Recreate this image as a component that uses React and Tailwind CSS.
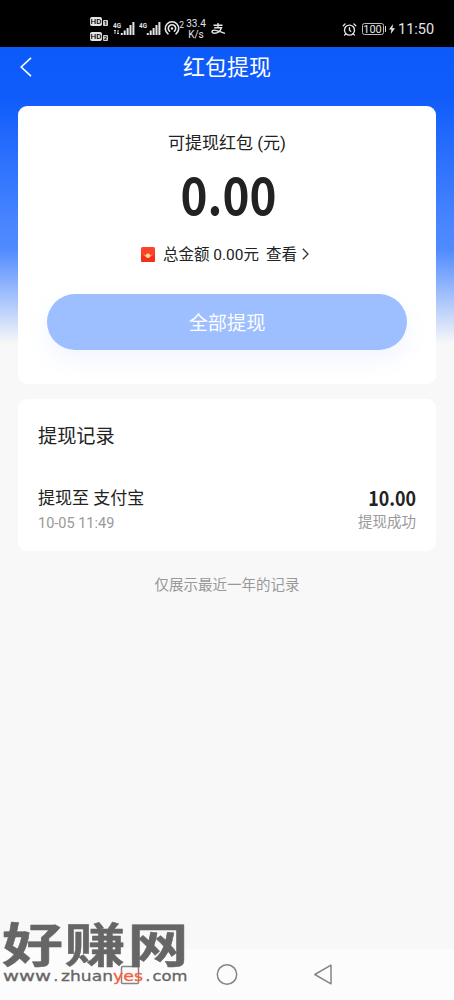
import { AlarmClock } from 'lucide-react';

const records = [
  { title: '提现至 支付宝', time: '10-05 11:49', amount: '10.00', status: '提现成功' },
];

const SignalIcon = ({ roaming }) => (
  <svg className="w-[22px] h-[16px]" viewBox="0 0 22 16" fill="#e5e5e5">
    <text x="0" y="6.5" fontSize="8" fontWeight="700" textLength="8" lengthAdjust="spacingAndGlyphs" fontFamily="Roboto">4G</text>
    {roaming && <path d="M2 9v4M1 10l1-1 1 1M5 9v4M4 12l1 1 1-1" stroke="#e5e5e5" strokeWidth="0.9" fill="none" />}
    <rect x="7.8" y="12" width="2" height="2" />
    <rect x="10.7" y="9.5" width="2" height="4.5" />
    <rect x="13.6" y="7" width="2" height="7" />
    <rect x="16.5" y="4" width="2" height="10" />
    <rect x="19.4" y="1" width="2" height="13" />
  </svg>
);

const StatusBar = () => (
  <div className="h-[47px] shrink-0 bg-black text-[#e5e5e5] flex justify-between pl-[90px] pr-5">
    <div className="flex">
      {/* HD badges */}
      <div className="flex flex-col gap-[6px] pt-[17px] w-[23px]">
        {['1', '2'].map((n) => (
          <div key={n} className="flex items-end gap-[1px] h-[9px]">
            <span className="w-[12px] h-[9px] rounded-[2px] bg-[#e5e5e5] text-black text-[8px] leading-[9px] font-medium text-center">HD</span>
            <span className="w-[5px] h-[6px] rounded-[1px] bg-[#d4d4d4] text-black text-[6px] leading-[6px] font-bold text-center">{n}</span>
          </div>
        ))}
      </div>
      <div className="flex pt-[21px] gap-[4px]">
        <SignalIcon roaming />
        <SignalIcon />
      </div>
      {/* Hotspot */}
      <svg className="w-[21px] h-[17px] mt-[20px] ml-[3px]" viewBox="0 0 21 17" fill="none" stroke="#e5e5e5" strokeWidth="1.6" strokeLinecap="round">
        <path d="M4 13.8a6.7 6.7 0 1 1 8 0" />
        <path d="M5.6 11.2a3.7 3.7 0 1 1 4.8 0" />
        <circle cx="8" cy="8.5" r="1.2" fill="#e5e5e5" stroke="none" />
        <text x="15.2" y="7.8" fontSize="8.5" fontFamily="Roboto" fill="#e5e5e5" stroke="none">2</text>
      </svg>
      <div className="w-[22px] pt-[18px] text-[10px] leading-[11px] text-center whitespace-nowrap">
        <div>33.4</div>
        <div>K/s</div>
      </div>
      {/* Alipay */}
      <svg className="w-[15px] h-[12px] mt-[23px] ml-[4px]" viewBox="0 0 15 12" fill="none" stroke="#e5e5e5" strokeWidth="1.4">
        <path d="M2.5 2.3h9M7 0v4.7M3.2 4.8h7.3C9.5 7.5 7 10.3 3.4 10.3c-3.2 0-2.9-3.2-.2-3.2 3 0 6.2 2 10.8 3.3" />
      </svg>
    </div>
    <div className="flex items-center pt-[11px]">
      <AlarmClock className="w-[15px] h-[15px]" strokeWidth={2.2} />
      <div className="ml-[5px] w-[22px] h-[12px] border border-[#bdbdbd] rounded-[2.5px] text-[11px] leading-[11px] text-center">100</div>
      <div className="w-[1.5px] h-[6px] ml-[1px] bg-[#d4d4d4]" />
      <svg className="w-[6px] h-[10px] ml-[3px]" viewBox="0 0 6 10" fill="#e5e5e5">
        <path d="M4 0L0 5.6h2.4L1.8 10 6 4.2H3.4z" />
      </svg>
      <span className="ml-[3px] mt-[2px] w-[36px] text-[14.5px] leading-none whitespace-nowrap">11:50</span>
    </div>
  </div>
);

const RedPacketIcon = () => (
  <svg className="w-[14px] h-[15px]" viewBox="0 0 14 15">
    <rect width="14" height="15" rx="1.5" fill="#fb4327" />
    <path d="M0 7.5Q7 12 14 7.5V13.5a1.5 1.5 0 0 1-1.5 1.5h-11A1.5 1.5 0 0 1 0 13.5z" fill="#f2301d" />
    <path d="M2.5 7.2q4.5 2.8 9 0l-1.5 2.4H4z" fill="#ff9a62" />
    <circle cx="7" cy="8.8" r="2.2" fill="#ffdc9b" />
  </svg>
);

const NavBar = () => (
  <div className="h-[51px] shrink-0 bg-[#fcfcfc] flex items-center justify-between pl-[119px] pr-[120px]">
    <svg className="w-[22px] h-[22px]" viewBox="0 0 22 22" fill="none" stroke="#858585" strokeWidth="1.5">
      <rect x="2.5" y="2.5" width="17" height="17" rx="1" />
    </svg>
    <svg className="w-[22px] h-[22px]" viewBox="0 0 22 22" fill="none" stroke="#858585" strokeWidth="1.5">
      <circle cx="11" cy="10.5" r="9.7" />
    </svg>
    <svg className="w-[22px] h-[22px]" viewBox="0 0 22 22" fill="none" stroke="#858585" strokeWidth="1.5" strokeLinejoin="round">
      <path d="M19 1.2v18.6L2.8 10.5z" />
    </svg>
  </div>
);

const Watermark = () => (
  <svg className="absolute left-0 bottom-0 w-[200px] h-[100px]" viewBox="0 0 200 100">
    <text transform="translate(0 62) scale(1 .77)" x="2 64.5 127.5" fontSize="61" fontWeight="700" fontFamily="Noto Sans CJK SC, sans-serif" fill="#666" stroke="#666" strokeWidth="0.6" strokeLinejoin="round">好赚网</text>
    <g transform="translate(0 81)" fontSize="14.5" fontFamily="DejaVu Sans, sans-serif" fill="#666" stroke="#666" strokeWidth="0.3">
      <text x="3" textLength="48" lengthAdjust="spacingAndGlyphs">www</text>
      <text x="53.5">.</text>
      <text x="61" textLength="52" lengthAdjust="spacingAndGlyphs">zhuan</text>
      <text x="113" textLength="30" lengthAdjust="spacingAndGlyphs" fill="#f5603d" stroke="#f5603d">yes</text>
      <text x="145.5">.</text>
      <text x="152.5" textLength="35" lengthAdjust="spacingAndGlyphs">com</text>
    </g>
  </svg>
);

const App = () => {
  return (
    <div className="relative h-screen w-full overflow-hidden flex flex-col bg-[#f8f8f8] text-[#222] font-[Roboto,'Noto_Sans_CJK_SC',sans-serif]">
      <StatusBar />

      <main className="flex-1 flex flex-col bg-[linear-gradient(180deg,#0d5afb_0px,#105cfb_50px,#4a86ff_180px,#4f8aff_202px,#f8f8f8_297px)]">
        {/* Header */}
        <header className="h-[40px] flex items-center text-white">
          <svg className="w-[12px] h-[20px] ml-[20px]" viewBox="0 0 12 20" fill="none" stroke="#fff" strokeWidth="1.6">
            <path d="M11 .8L1.2 10 11 19.2" />
          </svg>
          <h1 className="flex-1 text-center text-[22px] leading-[40px] pt-[2px] pr-[32px]">红包提现</h1>
        </header>

        {/* Balance card */}
        <section className="mx-[18px] mt-[19px] h-[278px] rounded-[9px] bg-white flex flex-col items-center px-[29px]">
          <p className="mt-[25px] text-[17px] leading-6">可提现红包 (元)</p>
          <p className="mt-[7px] ml-[2px] h-[62px] text-[52px] leading-[62px] font-bold scale-x-[0.88] font-['Noto_Sans_CJK_SC',sans-serif]">0.00</p>
          <div className="mt-[18px] pr-1 h-6 flex items-center text-[15.5px] leading-6">
            <RedPacketIcon />
            <span className="ml-[8px] pt-[1px]">总金额 0.00元</span>
            <span className="ml-[7px] pt-[1px]">查看</span>
            <svg className="w-[7px] h-[12px] ml-[5px]" viewBox="0 0 7 12" fill="none" stroke="#333" strokeWidth="1.3">
              <path d="M.8.8L6 6 .8 11.2" />
            </svg>
          </div>
          <button className="mt-[28px] pt-[5px] w-full h-[56px] rounded-full bg-[#9dbeff] text-white text-[19.2px] shadow-[0_10px_24px_rgba(60,120,255,0.07)]">
            全部提现
          </button>
        </section>

        {/* Records */}
        <section className="mx-[18px] mt-[15px] h-[152px] rounded-[9px] bg-white px-[20px]">
          <h2 className="pt-[24px] text-[19.2px] leading-[28px]">提现记录</h2>
          {records.map((r) => (
            <div key={r.time} className="mt-[34px] flex justify-between">
              <div>
                <p className="text-[17px] leading-[26px]">{r.title}</p>
                <p className="pt-[1px] text-[14.5px] leading-[23px] text-[#999]">{r.time}</p>
              </div>
              <div className="text-right">
                <p className="text-[20px] leading-[26px] font-bold origin-right scale-x-[0.89] font-['Noto_Sans_CJK_SC',sans-serif]">{r.amount}</p>
                <p className="pt-[1px] text-[14.5px] leading-[21px] text-[#999]">{r.status}</p>
              </div>
            </div>
          ))}
        </section>

        <p className="mt-[24px] text-center text-[14.5px] leading-[22px] text-[#999]">仅展示最近一年的记录</p>
      </main>

      <NavBar />
      <Watermark />
    </div>
  );
};

export default App;
